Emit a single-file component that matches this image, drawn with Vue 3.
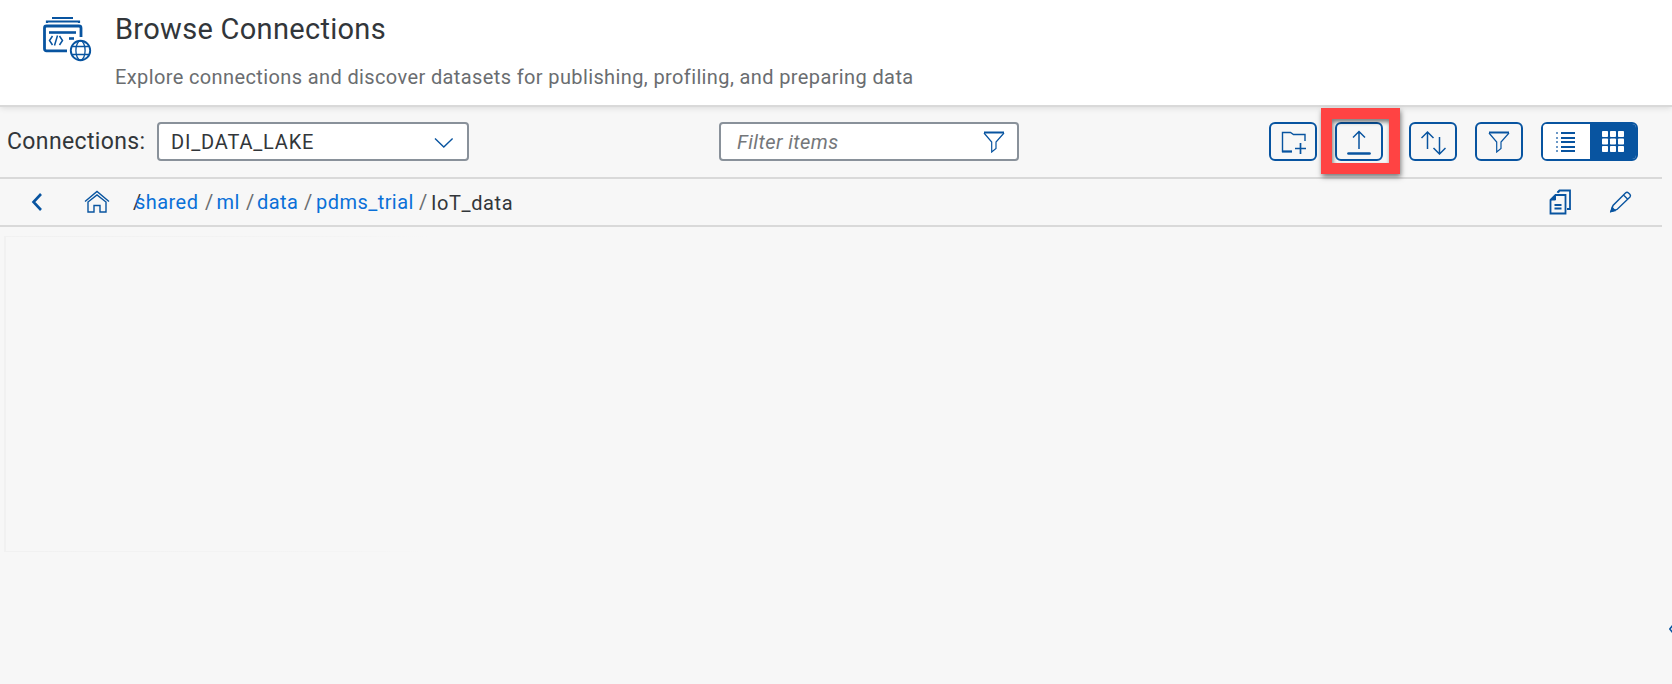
<script setup>
const connection = 'DI_DATA_LAKE'
const trail = ['shared', 'ml', 'data', 'pdms_trial']
</script>

<template>
  <div class="page">
    <header class="header">
      <svg class="app-icon" width="50" height="46" viewBox="0 0 50 46" fill="none" stroke="#0854a0" stroke-width="2">
        <path d="M10 2H31" /><path d="M5 7V5.500H37V7" stroke-width="2.200" />
        <path d="M25 34.800H4.500Q2.500 34.800 2.500 32.800V12Q2.500 10 4.500 10H37Q39 10 39 12V21" stroke-width="2.800" />
        <path d="M7 16.500H34" stroke-width="2.600" /><path d="M27 22.500H32" stroke-width="2.600" />
        <path d="M10.500 20L7.500 24.500L10.500 29M17.500 20L20.500 24.500L17.500 29M15.500 19.500L12.500 29.500" stroke-width="1.500" />
        <circle cx="38.500" cy="34.500" r="9.700" stroke-width="1.900" /><ellipse cx="38.500" cy="34.500" rx="4.600" ry="9.700" stroke-width="1.300" />
        <path d="M30 30.500H47M30 38.500H47" stroke-width="1.300" />
      </svg>
      <div class="heading">
        <h1>Browse Connections</h1>
        <p>Explore connections and discover datasets for publishing, profiling, and preparing data</p>
      </div>
    </header>

    <section class="toolbar">
      <label class="label">Connections:</label>
      <div class="field select">
        <span class="value">{{ connection }}</span>
        <svg width="20" height="12" viewBox="0 0 20 12" fill="none" stroke="#0854a0" stroke-width="1.400"><path d="M1 2.500L9.800 11L18.600 2.500" /></svg>
      </div>
      <div class="field search">
        <span class="placeholder">Filter items</span>
        <svg width="22" height="22" viewBox="0 0 22 22" fill="none" stroke="#0854a0" stroke-width="1.200"><path d="M1 1.500H21" stroke-width="2" /><path d="M1 2L8.700 11V21L13 17.500V11L21 2" /></svg>
      </div>
      <div class="actions">
        <button class="btn folder">
          <svg width="26" height="26" viewBox="0 0 26 26" fill="none" stroke="#0854a0" stroke-width="1.400"><path d="M11 22.500H1.500V3.500H9.500L12.500 5.500H24V12" /><path d="M1 22.500H11" stroke-width="2" /><path d="M14 19.500H25M19.500 14V25" stroke-width="1.700" /></svg>
        </button>
        <button class="btn upload">
          <svg width="26" height="26" viewBox="0 0 26 26" fill="none" stroke="#0854a0" stroke-width="1.500"><path d="M13 20V2.500M7 8.500L13 2.500L19 8.500" /><path d="M2.500 24.500H23.500" stroke-width="2.700" stroke-linecap="round" /></svg>
          <span class="highlight"></span>
        </button>
        <button class="btn sort">
          <svg width="26" height="26" viewBox="0 0 26 26" fill="none" stroke="#0854a0" stroke-width="1.500"><path d="M7.500 20V3M1.500 9L7.500 3L13.500 9M19.500 8V25M13.500 19L19.500 25L25.500 19" /></svg>
        </button>
        <button class="btn filter">
          <svg width="22" height="22" viewBox="0 0 22 22" fill="none" stroke="#0854a0" stroke-width="1.200"><path d="M1 1.500H21" stroke-width="2" /><path d="M1 2L8.700 11V21L13 17.500V11L21 2" /></svg>
        </button>
        <div class="segmented">
          <button class="seg">
            <svg width="20" height="22" viewBox="0 0 20 22" fill="#0854a0"><g v-for="y in [1, 6, 10, 15, 19]" :key="y"><rect x="0" :y="y" width="2" height="2" opacity="0.600" /><rect x="5" :y="y" width="14" height="2" /></g></svg>
          </button>
          <button class="seg active">
            <svg width="22" height="22" viewBox="0 0 22 22" fill="#fff"><template v-for="y in 3" :key="y"><rect v-for="x in 3" :key="x" :x="(x - 1) * 8" :y="(y - 1) * 7.500" width="6" height="6" rx="0.800" /></template></svg>
          </button>
        </div>
      </div>
    </section>

    <nav class="crumbs">
      <svg class="back" width="12" height="20" viewBox="0 0 12 20" fill="none" stroke="#0854a0" stroke-width="2.600"><path d="M10 2L2.500 10L10 18" /></svg>
      <svg class="home" width="26" height="24" viewBox="0 0 26 24" fill="none" stroke="#0854a0" stroke-width="1.400"><path d="M1 11.500L13 1.500L25 11.500" /><path d="M4 12V22H10V15.500H16V22H22V12L13 5Z" /></svg>
      <div class="trail">
        <span class="sep first">/</span>
        <template v-for="item in trail" :key="item"><a :class="['link', item]">{{ item }}</a><span :class="['sep', 'after-' + item]">/</span></template>
        <span class="current">IoT_data</span>
      </div>
      <svg class="copy" width="24" height="26" viewBox="0 0 24 26" fill="none" stroke="#0854a0" stroke-width="1.800"><path d="M1.500 11L6.500 6H16.500V24.500H1.500Z" /><path d="M1.500 11H6.500V6Z" fill="#0854a0" stroke-width="1" /><path d="M8.500 3.500L10.500 1.500H21V20H18M5.500 16H12.500M5.500 19.500H12.500" /><path d="M7.500 3.500L10.500 1V3.500Z" fill="#0854a0" stroke="none" /></svg>
      <svg class="edit" width="24" height="24" viewBox="0 0 24 24" fill="none" stroke="#0854a0" stroke-width="1.400"><path d="M2 21.500L4 15.500L16.500 3Q18 1.500 19.500 3L21 4.500Q22 6 21 7L8 19.500ZM14.500 5L19 9.500" /><path d="M2 21.500L3.200 17.500L6 20.500Z" fill="#0854a0" /></svg>
    </nav>
    <main class="content">
      <div class="panel"></div>
      <svg class="expand" width="3" height="8" viewBox="0 0 3 8" fill="none" stroke="#0854a0" stroke-width="1.600"><path d="M4 0L0.800 4L4 8" /></svg>
    </main>
  </div>
</template>

<style>
body { margin: 0; }
</style>
<style scoped>
* { box-sizing: border-box; }
.page { width: 1672px; height: 684px; background: #f7f7f7; font-family: Roboto, "Liberation Sans", sans-serif; font-size: 20px; color: #32363a; overflow: hidden; display: flex; flex-direction: column; }
svg { display: block; flex: none; }
.header { height: 107px; background: #fff; border-bottom: 2px solid #d9d9d9; display: flex; padding: 16px 0 0 42px; flex: none; box-shadow: 0 1px 6px rgba(0,0,0,.12); }
.heading { margin-left: 23px; white-space: nowrap; }
h1 { margin: -4px 0 0; font-size: 29px; font-weight: 400; line-height: 34px; letter-spacing: .3px; }
p { margin: 19px 0 0; line-height: 24px; color: #6a6d70; letter-spacing: .38px; }
.toolbar { width: 1662px; height: 72px; border-bottom: 2px solid #d9d9d9; display: flex; padding: 15px 24px 0 7px; flex: none; }
.label { width: 150px; font-size: 23px; line-height: 40px; letter-spacing: .37px; }
.field { height: 39px; border: 2px solid #89919a; border-radius: 4px; background: #fff; display: flex; align-items: center; justify-content: space-between; }
.select { width: 312px; padding: 0 13px 0 12px; }
.value { letter-spacing: .82px; }
.search { width: 300px; margin-left: 250px; padding: 0 12px 0 16px; }
.placeholder { font-style: italic; color: #74777a; letter-spacing: .42px; }
.actions { margin-left: auto; display: flex; }
.btn { position: relative; width: 48px; height: 39px; border: 2px solid #0854a0; border-radius: 6px; background: #f7f7f7; padding: 0; display: flex; align-items: center; justify-content: center; }
.folder { padding-left: 2px; }
.upload { margin-left: 18px; }
.sort { margin-left: 26px; }
.filter { margin-left: 18px; }
.highlight { position: absolute; left: -16px; top: -16px; width: 79px; height: 66px; border: 11px solid #ff4343; box-shadow: 1px 3px 5px rgba(0,0,0,.5), inset 1px 3px 4px rgba(0,0,0,.5); }
.segmented { margin-left: 18px; width: 97px; height: 39px; border: 2px solid #0854a0; border-radius: 6px; display: flex; overflow: hidden; }
.seg { border: 0; padding: 0; width: 47px; background: #fff; display: flex; align-items: center; justify-content: center; }
.seg.active { background: #0854a0; }
.crumbs { width: 1662px; height: 48px; border-bottom: 2px solid #d9d9d9; display: flex; align-items: center; flex: none; padding-left: 31px; }
.home { margin-left: 41px; }
.trail { margin-left: 23px; display: flex; white-space: nowrap; }
.sep { width: 11px; color: #6a6d70; }
.sep.first { width: 2px; color: #32363a; }
.after-data, .after-pdms_trial { width: 12px; }
.link { color: #0a70d8; letter-spacing: .45px; }
.shared { width: 70px; }
.ml { width: 30px; padding-left: .5px; }
.data { width: 47px; }
.pdms_trial { width: 103px; }
.current { letter-spacing: .6px; padding-top: 1px; margin-bottom: -1px; }
.copy { margin-left: auto; }
.edit { margin: 0 29px 0 36px; }
.content { flex: 1; display: flex; align-items: flex-start; padding: 9px 0 0 4px; }
.panel { width: 424px; height: 316px; border: solid #f3f3f3; border-width: 1px 0 1px 2px; border-image: linear-gradient(90deg, #f1f1f1, #f4f4f4 80%, #f7f7f7) 1; }
.expand { margin: 389px 0 0 auto; }
</style>
